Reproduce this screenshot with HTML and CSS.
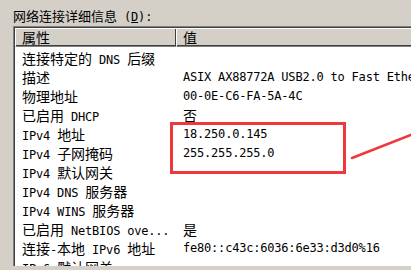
FILE: index.html
```html
<!DOCTYPE html>
<html lang="zh-CN">
<head>
<meta charset="utf-8">
<link rel="stylesheet" href="styles.css">
</head>
<body>
<div class="win">
  <div class="title">网络连接详细信息<span class="l"> (<u>D</u>):</span></div>
  <div class="list">
    <div class="head">
      <div class="hc c1">属性</div>
      <div class="hc c2">值</div>
    </div>
    <div class="rows">
      <div class="row"><div class="k">连接特定的<span class="l"> DNS </span>后缀</div><div class="v"></div></div>
      <div class="row"><div class="k">描述</div><div class="v l">ASIX AX88772A USB2.0 to Fast Ethernet Adapter</div></div>
      <div class="row"><div class="k">物理地址</div><div class="v l">00-0E-C6-FA-5A-4C</div></div>
      <div class="row"><div class="k">已启用<span class="l"> DHCP</span></div><div class="v">否</div></div>
      <div class="row"><div class="k"><span class="l">IPv4 </span>地址</div><div class="v l">18.250.0.145</div></div>
      <div class="row"><div class="k"><span class="l">IPv4 </span>子网掩码</div><div class="v l">255.255.255.0</div></div>
      <div class="row"><div class="k"><span class="l">IPv4 </span>默认网关</div><div class="v"></div></div>
      <div class="row"><div class="k"><span class="l">IPv4 DNS </span>服务器</div><div class="v"></div></div>
      <div class="row"><div class="k"><span class="l">IPv4 WINS </span>服务器</div><div class="v"></div></div>
      <div class="row"><div class="k">已启用<span class="l"> NetBIOS ove...</span></div><div class="v">是</div></div>
      <div class="row"><div class="k">连接<span class="l">-</span>本地<span class="l"> IPv6 </span>地址</div><div class="v l">fe80::c43c:6036:6e33:d3d0%16</div></div>
      <div class="row"><div class="k"><span class="l">IPv6 </span>默认网关</div><div class="v"></div></div>
    </div>
  </div>
  <div class="mark"></div>
  <svg class="arrow" width="411" height="270" viewBox="0 0 411 270">
    <line x1="352" y1="158" x2="413" y2="134" stroke="#f0383c" stroke-width="2.5" stroke-linecap="round"/>
  </svg>
</div>
</body>
</html>
```

FILE: styles.css
```css
html, body {
  margin: 0;
  padding: 0;
}
body {
  width: 411px;
  height: 270px;
  overflow: hidden;
  background: #d4d0c8;
  color: #000;
  font-family: "Noto Sans CJK SC", sans-serif;
  font-size: 14px;
}
.win {
  position: relative;
  width: 411px;
  height: 270px;
}
.l {
  font-family: "DejaVu Sans Mono", "Noto Sans CJK SC", monospace;
  font-size: 12px;
  letter-spacing: -0.2px;
}
.title {
  height: 19px;
  padding: 7px 0 0 13px;
  font-size: 13px;
  line-height: 17px;
  white-space: nowrap;
}
.title .l {
  font-size: 12px;
}
.list {
  margin-left: 13px;
  height: 239px;
  border-top: 1px solid #808080;
  border-left: 1px solid #808080;
  overflow: hidden;
  display: flex;
  flex-direction: column;
}
.head {
  display: flex;
  border-top: 1px solid #404040;
  border-left: 1px solid #404040;
  height: 19px;
  flex: none;
}
.hc {
  box-sizing: border-box;
  height: 19px;
  background: #d4d0c8;
  border-top: 1px solid #fff;
  border-left: 1px solid #fff;
  border-bottom: 1px solid #808080;
  box-shadow: inset 0 -1px 0 #404040, inset -1px 0 0 #404040;
  line-height: 17px;
  padding-left: 6px;
  white-space: nowrap;
}
.c1 {
  width: 161px;
}
.c2 {
  flex: 1;
  padding-left: 6px;
  box-shadow: inset 0 -1px 0 #404040;
}
.rows {
  flex: 1;
  background: #fff;
  border-left: 1px solid #404040;
  padding-top: 2px;
}
.row {
  display: flex;
  height: 19px;
  line-height: 19px;
  white-space: nowrap;
}
.k {
  width: 160px;
  flex: none;
  padding-left: 7px;
  overflow: hidden;
}
.v {
  flex: 1;
  overflow: hidden;
  padding-left: 1px;
}
.mark {
  position: absolute;
  left: 170px;
  top: 122px;
  width: 170px;
  height: 46px;
  border: 3px solid #f0383c;
}
.arrow {
  position: absolute;
  left: 0;
  top: 0;
}
```
